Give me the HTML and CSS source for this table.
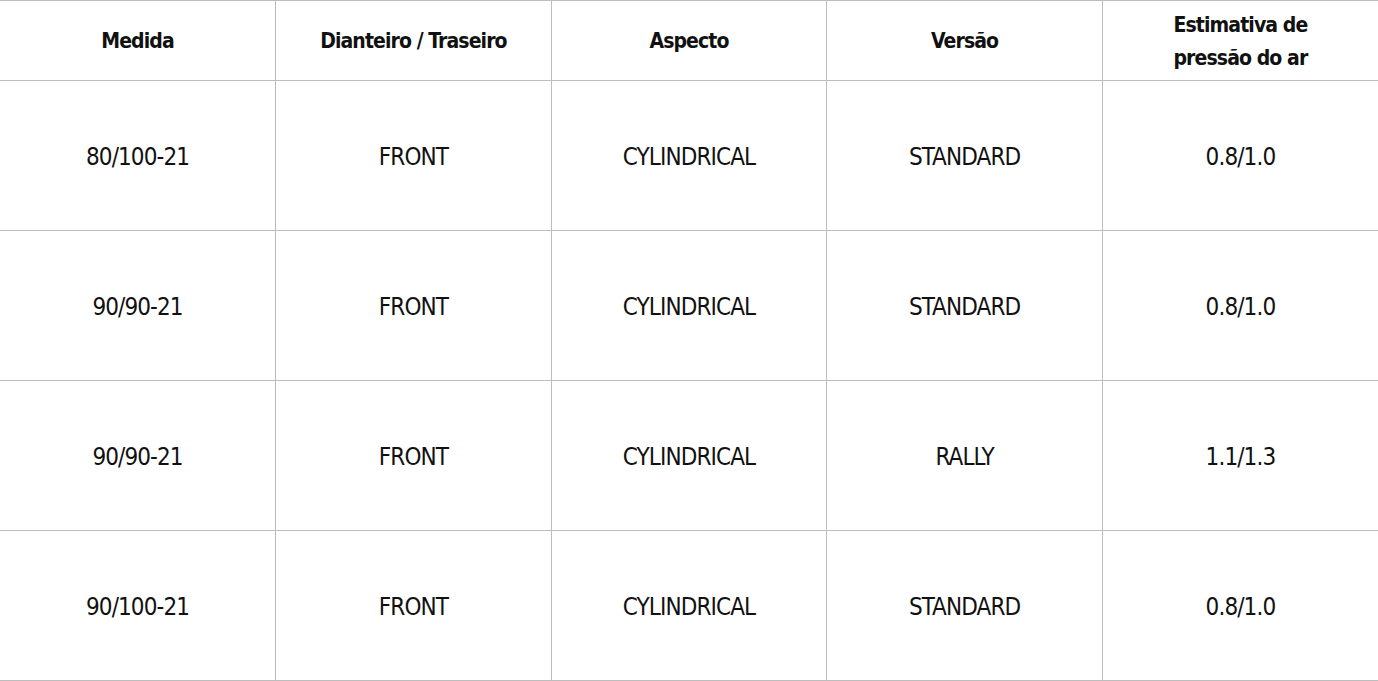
FILE: index.html
```html
<!DOCTYPE html>
<html lang="pt">
<head>
<meta charset="utf-8">
<title>Tabela de medidas</title>
<link rel="stylesheet" href="styles.css">
</head>
<body>
<table class="spec-table">
  <thead>
    <tr class="head-row">
      <th>Medida</th>
      <th>Dianteiro / Traseiro</th>
      <th>Aspecto</th>
      <th>Versão</th>
      <th>Estimativa de<br>pressão do ar</th>
    </tr>
  </thead>
  <tbody>
    <tr class="data-row">
      <td>80/100-21</td><td>FRONT</td><td>CYLINDRICAL</td><td>STANDARD</td><td>0.8/1.0</td>
    </tr>
    <tr class="data-row">
      <td>90/90-21</td><td>FRONT</td><td>CYLINDRICAL</td><td>STANDARD</td><td>0.8/1.0</td>
    </tr>
    <tr class="data-row">
      <td>90/90-21</td><td>FRONT</td><td>CYLINDRICAL</td><td>RALLY</td><td>1.1/1.3</td>
    </tr>
    <tr class="data-row">
      <td>90/100-21</td><td>FRONT</td><td>CYLINDRICAL</td><td>STANDARD</td><td>0.8/1.0</td>
    </tr>
  </tbody>
</table>
</body>
</html>
```
FILE: styles.css
```css
html, body {
  margin: 0;
  padding: 0;
  background: #ffffff;
}

body {
  font-family: "Liberation Sans Narrow", "DejaVu Sans Condensed", "Liberation Sans", sans-serif;
  color: #111111;
}

.spec-table {
  width: 100%;
  table-layout: fixed;
  border-collapse: collapse;
  border-top: 1px solid #bdbdbd;
}

.spec-table th,
.spec-table td {
  text-align: center;
  vertical-align: middle;
  padding: 0;
  border-left: 1px solid #bdbdbd;
  border-bottom: 1px solid #bdbdbd;
}

.spec-table th:first-child,
.spec-table td:first-child {
  border-left: none;
}

.head-row th {
  height: 77px;
  padding-top: 2px;
  font-size: 21px;
  font-weight: 700;
  letter-spacing: -0.9px;
  line-height: 33px;
}

.data-row td {
  height: 147px;
  padding-top: 2px;
  font-size: 24px;
  font-weight: 400;
  letter-spacing: -0.9px;
  line-height: 30px;
}
```
